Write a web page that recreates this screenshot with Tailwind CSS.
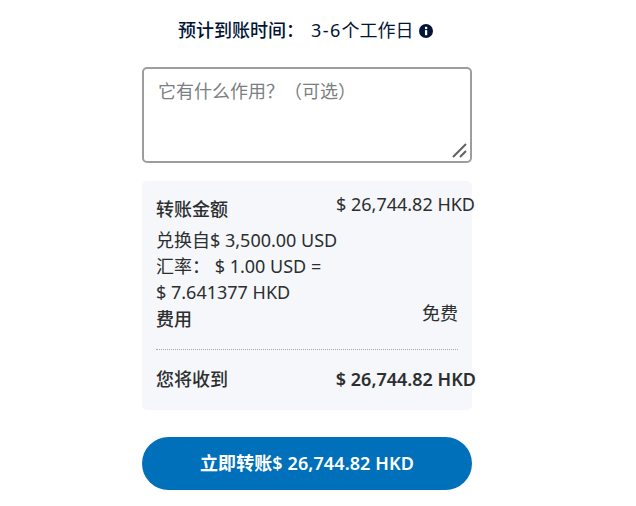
<!DOCTYPE html>
<html lang="zh-CN">
<head>
<meta charset="utf-8">
<script src="https://cdn.jsdelivr.net/npm/@tailwindcss/browser@4"></script>
</head>
<body class="bg-white font-['Noto_Sans','Noto_Sans_CJK_SC',sans-serif] text-[18px] text-[#2c2e2f]">
<div class="w-[636px] h-[506px] overflow-hidden pl-[142px]">
  <div class="w-[330px]">
    <div class="h-[67px] pt-[17px] pl-[36px] flex items-start leading-[27px] text-[#001435]">
      <span class="font-medium mr-[7px]">预计到账时间：</span>
      <span class="flex items-center gap-[5px]"><span><span class="tracking-[1.4px]">3-6</span>个工作日</span>
        <svg class="w-[14px] h-[14px]" viewBox="0 0 16 16"><circle cx="8" cy="8" r="8" fill="#001435"/><rect x="6.8" y="7" width="2.6" height="5.8" fill="#fff"/><rect x="6.8" y="3.2" width="2.6" height="2.6" fill="#fff"/></svg>
      </span>
    </div>
    <div class="relative h-[96px] border-2 border-[#9a9ea1] rounded-[5px] px-[14px] pt-[9px] leading-[27px] text-[#7b7f82]">它有什么作用？（可选）
      <svg class="absolute right-[3px] bottom-[3px] w-[15px] h-[15px]" viewBox="0 0 15 15"><path d="M1 14 14 1M8 14l6-6" stroke="#5f6265" stroke-width="2" fill="none"/></svg>
    </div>
    <div class="mt-[18px] bg-[#f5f7fa] rounded-[5px] h-[229px] px-[14px]">
      <div class="flex justify-between h-[46px]">
        <span class="font-medium pt-[15px] leading-[27px]">转账金额</span>
        <span class="pt-[10px] leading-[27px] -mr-[17px]">$ 26,744.82 HKD</span>
      </div>
      <div class="w-[190px] leading-[26px]">
        <div>兑换自$ 3,500.00 USD</div>
        <div>汇率： $ 1.00 USD =</div>
        <div>$ 7.641377 HKD</div>
      </div>
      <div class="flex justify-between h-[43px] mt-[1px]">
        <span class="font-medium leading-[27px]">费用</span>
        <span class="leading-[27px] -mt-[6px]">免费</span>
      </div>
      <div class="border-t border-dotted border-[#a4a7aa]"></div>
      <div class="flex justify-between mt-[16px] font-semibold leading-[27px]">
        <span class="font-medium">您将收到</span>
        <span class="-mr-[18px]">$ 26,744.82 HKD</span>
      </div>
    </div>
    <div class="mt-[27px] h-[53px] rounded-full bg-[#0070ba] text-white font-semibold tracking-[0.1px] flex items-center justify-center">立即转账$ 26,744.82 HKD</div>
  </div>
</div>
</body>
</html>
